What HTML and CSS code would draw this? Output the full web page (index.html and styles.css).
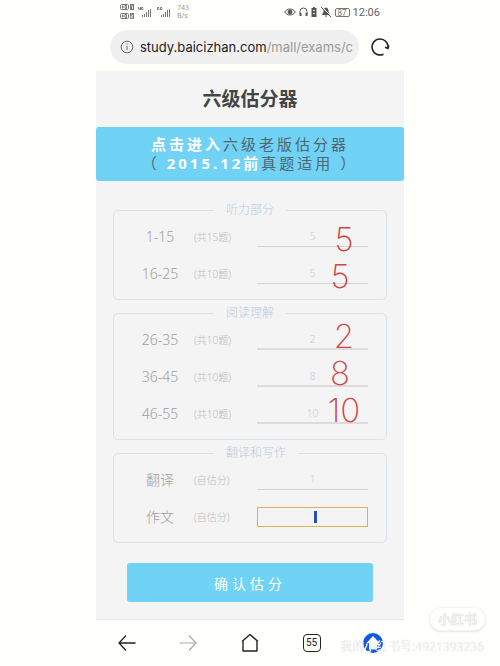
FILE: index.html
```html
<!DOCTYPE html>
<html lang="zh-CN">
<head>
<meta charset="utf-8">
<meta name="viewport" content="width=device-width, initial-scale=1">
<title>六级估分器</title>
<link rel="stylesheet" href="styles.css">
</head>
<body>
<div class="phone">
  <header class="status">
    <div class="status-group">
      <svg width="14" height="18" viewBox="0 0 14 18" aria-hidden="true">
        <g fill="none" stroke="#777"><rect x=".5" y="1.500" width="8" height="5" rx="1"/><rect x=".5" y="10.500" width="8" height="5" rx="1"/><path d="M2.500 2.500v3M4 4H2.500M5 2.500v3h1.500v-3zM2.500 11.500v3M4 13H2.500M5 11.500v3h1.500v-3z"/></g>
        <path fill="#777" d="M10 1h4v6h-4zM10 10h4v6h-4z"/><path stroke="#ddd" fill="none" d="M11 3h1.500v3M11 12h1.500v1.500H11V15h2"/>
      </svg>
      <svg width="15" height="12" viewBox="0 0 15 12" aria-hidden="true"><path stroke="#777" fill="none" d="M1.500 1v2h2M3.500 1v3M6 1.500H4.500v2H6V2.500"/><path fill="#777" d="M5 9h1v2H5zM7 8h1v3H7zM9 6h1v5H9zM11 4h1v7h-1zM13 3h1v8h-1z"/></svg>
      <svg class="signal-second" width="15" height="12" viewBox="0 0 15 12" aria-hidden="true"><path stroke="#777" fill="none" d="M3 1.500H1.500v2H3V2.500M6 1.500H4.500v2H6V2.500"/><path fill="#777" d="M5 9h1v2H5zM7 8h1v3H7zM9 6h1v5H9zM11 4h1v7h-1zM13 3h1v8h-1z"/></svg>
      <span class="speed">743<br>B/s</span>
    </div>
    <div class="status-group">
      <svg width="12" height="10" viewBox="0 0 12 10" fill="none" stroke="#555" aria-hidden="true"><path d="M.7 5C3 1 9 1 11.300 5 9 9 3 9 .7 5z"/><circle cx="6" cy="5" r="2" fill="#555"/></svg>
      <svg width="9" height="10" viewBox="0 0 9 10" fill="none" stroke="#555" aria-hidden="true"><path d="M1 7V4.500a3.500 3.500 0 0 1 7 0V7"/><path stroke-width="2" d="M1.500 6v3M7.500 6v3"/></svg>
      <svg width="6" height="10" viewBox="0 0 6 10" aria-hidden="true"><path fill="#555" d="M2 0h2v1h1.500v9H.5V1H2z"/><path fill="#ddd" d="M2 3h2v1H2zM2 6h2v1H2z"/></svg>
      <svg class="bell" width="10" height="10" viewBox="0 0 10 10" aria-hidden="true"><path fill="#555" d="M5 .5c2 .5 2.500 2 2.500 4L9 8H1l1.500-3.500c0-2 .5-3.500 2.500-4zM4 8.500h2v1H4z"/><path stroke="#fff" d="M1 0l9 9"/><path stroke="#555" d="M0 0l10 10"/></svg>
      <span class="battery">87</span>
      <time class="clock">12:06</time>
    </div>
  </header>

  <div class="address">
    <a class="url" href="#">
      <svg width="14" height="14" viewBox="0 0 14 14" fill="none" stroke="#666" aria-hidden="true"><circle cx="7" cy="7" r="5.800"/><path d="M7 6v4M7 3.500v1.200"/></svg>
      <span class="url-text">study.baicizhan.com<span class="url-path">/mall/exams/ce</span></span>
    </a>
    <button class="icon-button" type="button" aria-label="刷新">
      <svg width="20" height="20" viewBox="0 0 20 20" fill="none" stroke="#222" stroke-width="1.500"><path d="M13.500 17.200A8 8 0 1 1 18 11"/><path d="M15 10.300l3 1.200.8-3"/></svg>
    </button>
  </div>

  <main class="page">
    <h1 class="title">六级估分器</h1>
    <a class="banner" href="#"><b>点击进入</b>六级老版估分器<br>（<b> 2015.12前</b>真题适用 ）</a>

    <form class="form">
      <fieldset class="group listening">
        <legend>听力部分</legend>
        <div class="row"><label for="q1">1-15</label><small>(共15题)</small><div class="field"><input id="q1" value="5"><span class="mark">5</span></div></div>
        <div class="row"><label for="q2">16-25</label><small>(共10题)</small><div class="field"><input id="q2" value="5"><span class="mark mark-left">5</span></div></div>
      </fieldset>
      <fieldset class="group reading">
        <legend>阅读理解</legend>
        <div class="row"><label for="q3">26-35</label><small>(共10题)</small><div class="field"><input id="q3" value="2"><span class="mark">2</span></div></div>
        <div class="row"><label for="q4">36-45</label><small>(共10题)</small><div class="field"><input id="q4" value="8"><span class="mark mark-left">8</span></div></div>
        <div class="row"><label for="q5">46-55</label><small>(共10题)</small><div class="field"><input id="q5" value="10"><span class="mark">10</span></div></div>
      </fieldset>
      <fieldset class="group">
        <legend>翻译和写作</legend>
        <div class="row"><label for="q6">翻译</label><small>(自估分)</small><div class="field"><input id="q6" value="1"></div></div>
        <div class="row"><label for="q7">作文</label><small>(自估分)</small><div class="field"><input id="q7" class="active"><span class="caret"></span></div></div>
      </fieldset>
      <button class="submit" type="button">确认估分</button>
    </form>
  </main>

  <nav class="toolbar">
    <button class="icon-button" type="button" aria-label="后退"><svg width="18" height="18" viewBox="0 0 18 18" fill="none" stroke="#222" stroke-width="1.300"><path d="M17.500 9H1M8 1.500L1 9l7 7.500"/></svg></button>
    <button class="icon-button" type="button" aria-label="前进"><svg width="18" height="18" viewBox="0 0 18 18" fill="none" stroke="#aaa" stroke-width="1.200"><path d="M.5 9H17M10 1.500L17 9l-7 7.500"/></svg></button>
    <button class="icon-button" type="button" aria-label="主页"><svg width="18" height="20" viewBox="0 0 18 20" fill="none" stroke="#222" stroke-width="1.400" stroke-linejoin="round"><path d="M1 8.500L9 1.500l8 7M2 7.700V18h14V7.700"/></svg></button>
    <button class="tabs" type="button" aria-label="标签页">55</button>
    <button class="icon-button" type="button" aria-label="返回顶部"><svg width="20" height="20" viewBox="0 0 20 20"><circle cx="10" cy="10" r="10" fill="#1259e0"/><path fill="#fff" d="M10 3l6.500 7H14v6.500H6V10H3.500z"/></svg></button>
  </nav>
</div>
<div class="watermark">
  <span class="brand">小红书</span>
  <span class="account">我的小红书号:4921393236</span>
</div>
</body>
</html>
```
FILE: styles.css
```css
* { box-sizing: border-box; }
body {
  margin: 0;
  padding: 0 96px;
  background: #fffffc;
  color: #444;
  font-family: "Noto Sans", "Noto Sans CJK SC", sans-serif;
}
button, input { font: inherit; }
svg { display: block; flex: none; }
a { color: inherit; text-decoration: none; }

.status {
  display: flex;
  justify-content: space-between;
  height: 24px;
  padding: 0 24px;
}
.status-group { display: flex; align-items: center; gap: 3px; }
.signal-second { margin-left: 1px; }
.speed { margin-left: 3px; color: #999; font-size: 7px; line-height: 8px; }
.bell { margin: 0 1px; }
.battery {
  width: 15px;
  border: 1px solid #777;
  border-radius: 2px;
  color: #777;
  font-size: 8px;
  line-height: 7px;
  text-align: center;
}
.clock { color: #666; font: 11px "Roboto", sans-serif; }

.address {
  display: flex;
  align-items: center;
  gap: 11px;
  padding: 6px 14px 7px;
}
.url {
  display: flex;
  flex: 1;
  align-items: center;
  gap: 6px;
  min-width: 0;
  height: 34px;
  padding: 0 6px 0 10px;
  border-radius: 17px;
  background: #f0f0f0;
}
.url-text {
  overflow: hidden;
  color: #222;
  font: 400 13px/20px "Inter", sans-serif;
  white-space: nowrap;
}
.url-path { color: #999; }
.icon-button {
  display: grid;
  place-items: center;
  padding: 0;
  border: 0;
  background: none;
}

.page { background: #f4f4f4; border-bottom: 1px solid #e9e9e9; }
.title {
  margin: 0;
  padding: 14px 0;
  color: #444;
  font-size: 19px;
  font-weight: 700;
  line-height: 28px;
  text-align: center;
}
.banner {
  display: block;
  padding: 8px 0;
  border-radius: 3px;
  background: #70d2f4;
  color: #506670;
  font-size: 15px;
  letter-spacing: 3px;
  line-height: 19px;
  text-align: center;
}
.banner b { color: #fff; }

.form { padding: 21px 17px 17px; }
.group {
  min-width: 0;
  margin: 0 0 5px;
  padding: 0 18px 7px;
  border: 1px solid #dbe1ec;
  border-radius: 5px;
}
.group legend {
  margin-left: 82px;
  padding: 0 12px;
  color: #b9cbdf;
  font-size: 12px;
  font-weight: 300;
  line-height: 16px;
}
.row {
  display: grid;
  grid-template-columns: 56px 57px 1fr;
  column-gap: 6px;
  align-items: center;
  height: 37px;
}
.row label {
  color: #a0a0a0;
  font-size: 14px;
  font-weight: 300;
  line-height: 20px;
  text-align: center;
}
.row small { color: #bbb; font-size: 10px; font-weight: 300; white-space: nowrap; }
.field { position: relative; }
.field input {
  display: block;
  width: 100%;
  height: 20px;
  padding: 0;
  border: 0;
  border-bottom: 1px solid #d4d4d4;
  outline: 0;
  border-radius: 0;
  background: none;
  color: #c9cede;
  font-size: 10px;
  font-weight: 300;
  text-align: center;
}
.reading input { border-bottom: 2px solid #dcdcdc; }
.field input.active { border: 1px solid #d2b650; }

/* Handwritten-style scores laid over the fields */
.mark {
  position: absolute;
  top: -8px;
  right: 6px;
  width: 36px;
  color: #cd4846;
  font: 200 33px/40px "Inter", sans-serif;
  text-align: center;
}
.mark-left { right: 10px; }
.reading .mark { top: -14px; }
.caret {
  position: absolute;
  top: 4px;
  left: 57px;
  width: 3px;
  height: 12px;
  background: #2554b4;
}

.submit {
  display: block;
  width: calc(100% - 28px);
  height: 39px;
  margin: 20px auto 0;
  padding: 0;
  border: 0;
  border-radius: 3px;
  background: #70d2f4;
  color: #fff;
  font-size: 14px;
  letter-spacing: 4px;
}

.toolbar {
  display: grid;
  grid-template-columns: repeat(5, 1fr);
  place-items: center;
  height: 46px;
}
.tabs {
  width: 18px;
  height: 18px;
  padding: 0;
  border: 1px solid #222;
  border-radius: 4px;
  background: none;
  color: #222;
  font: 10px/16px "Roboto", sans-serif;
}

.watermark {
  position: fixed;
  right: 14px;
  bottom: 11px;
  display: flex;
  flex-direction: column;
  align-items: flex-end;
  gap: 8px;
  pointer-events: none;
}
.brand {
  padding: 0 8px;
  border: 1px solid #f3f3f1;
  border-radius: 13px;
  background: #fffffd;
  box-shadow: 0 1px 2px #e4e4e2;
  color: #f1f1ef;
  font-size: 13px;
  font-weight: 700;
  line-height: 22px;
  text-shadow: 0 0 1px #bbb;
}
.account {
  padding-right: 2px;
  color: #f6f6f4;
  font-size: 12px;
  line-height: 16px;
  text-shadow: 0 0 1px #ccc;
}
```
